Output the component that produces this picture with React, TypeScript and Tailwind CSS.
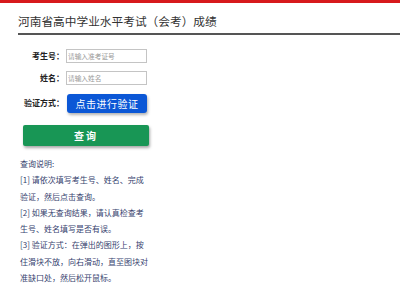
import { useState } from 'react'

const font = { fontFamily: '"Noto Sans CJK SC", "Noto Sans", sans-serif' }

const notes = [
  '查询说明:',
  '[1] 请依次填写考生号、姓名、完成验证，然后点击查询。',
  '[2] 如果无查询结果，请认真检查考生号、姓名填写是否有误。',
  '[3] 验证方式：在弹出的图形上，按住滑块不放，向右滑动，直至图块对准缺口处，然后松开鼠标。',
]

export default function App() {
  const [examNo, setExamNo] = useState('')
  const [name, setName] = useState('')

  return (
    <div
      className="h-[300px] w-[400px] overflow-hidden bg-white"
      style={font}>
      <div className="h-[3px] bg-[#d7191c]" />

      {/* Title */}
      <div className="ml-[18px] border-b-2 border-[#555] pt-[11px] pb-[5px] text-[11.7px] leading-[14px] text-[#333]">
        河南省高中学业水平考试（会考）成绩
      </div>

      {/* Form */}
      <div className="mt-[14px] flex items-center">
        <div className="w-[64px] text-right text-[8px] leading-[14px] font-bold text-[#222]">
          考生号：
        </div>
        <input
          value={examNo}
          onChange={(e) => setExamNo(e.target.value)}
          placeholder="请输入准考证号"
          className="ml-[2px] h-[14px] w-[81px] border border-[#c4c4c4] px-[1px] text-[6.7px] text-[#333] outline-none placeholder:text-[#999]"
        />
      </div>
      <div className="mt-[8px] flex items-center">
        <div className="w-[64px] text-right text-[8px] leading-[14px] font-bold text-[#222]">
          姓名：
        </div>
        <input
          value={name}
          onChange={(e) => setName(e.target.value)}
          placeholder="请输入姓名"
          className="ml-[2px] h-[14px] w-[81px] border border-[#c4c4c4] px-[1px] text-[6.7px] text-[#333] outline-none placeholder:text-[#999]"
        />
      </div>
      <div className="mt-[9px] flex items-center">
        <div className="w-[64px] pb-[2px] text-right text-[8px] leading-[14px] font-bold text-[#222]">
          验证方式：
        </div>
        <button className="ml-[3px] h-[19px] w-[80px] rounded-[3px] bg-[#0b57d6] text-[10px] leading-[19px] tracking-[0.5px] text-white shadow-[1px_2px_3px_rgba(0,0,0,0.3)]">
          点击进行验证
        </button>
      </div>

      <button className="mt-[12px] ml-[23px] block h-[21px] w-[126px] rounded-[2px] bg-[#189655] text-[10px] leading-[21px] font-bold tracking-[2px] text-white shadow-[1px_2px_3px_rgba(0,0,0,0.35)]">
        查询
      </button>

      {/* Notes */}
      <div className="mt-[10px] ml-[20px] w-[129px] text-[8px] leading-[16.3px] text-[#36426e]">
        {notes.map((n) => (
          <p key={n}>{n}</p>
        ))}
      </div>
    </div>
  )
}
